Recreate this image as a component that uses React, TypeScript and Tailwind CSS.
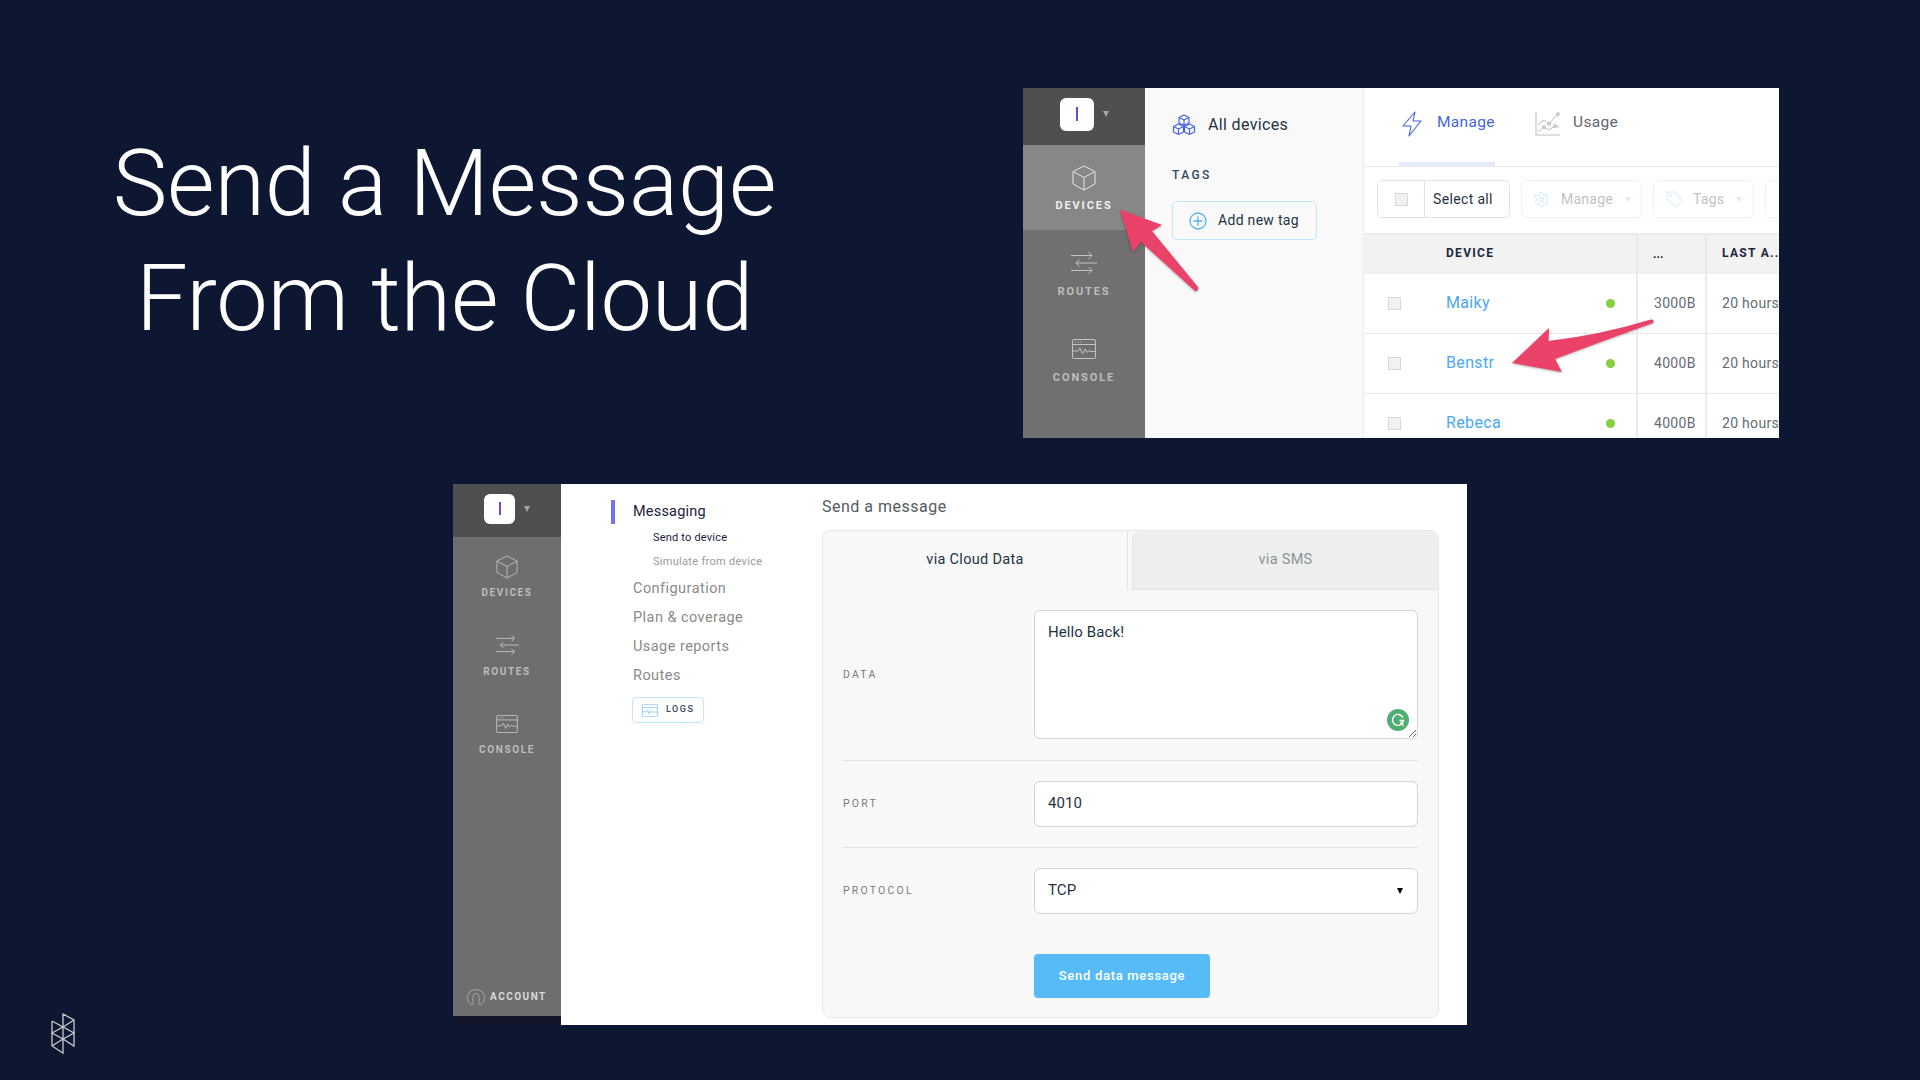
import type { ReactNode } from "react";

function CubeIcon({ className }: { className: string }) {
  return (
    <svg viewBox="0 0 24 26" fill="none" stroke="currentColor" strokeWidth="1" strokeLinejoin="round" className={className}>
      <path d="M12 1 23 6.5V19L12 25 1 19V6.5Z" />
      <path d="M1 6.5 12 12.5 23 6.5M12 12.5V25" />
    </svg>
  );
}

function RoutesIcon({ className }: { className: string }) {
  return (
    <svg viewBox="0 0 26 24" fill="none" stroke="currentColor" strokeWidth="1" className={className}>
      <path d="M0 4.5H21M17.5 1 21 4.5 17.5 8" />
      <path d="M26 12H5M8.5 8.5 5 12 8.5 15.5" />
      <path d="M0 19.5H21M17.5 16 21 19.5 17.5 23" />
    </svg>
  );
}

function ConsoleIcon({ className }: { className: string }) {
  return (
    <svg viewBox="0 0 24 20" fill="none" stroke="currentColor" strokeWidth="1" className={className}>
      <rect x="0.5" y="0.5" width="23" height="19" rx="1.5" />
      <path d="M0.5 5.5H23.5" />
      <path d="M3 3H4M5.5 3H6.5M8 3H9" />
      <path d="M1 12H6L8 9 10.5 15 13 10 15 13.5 17 11.5 19 12.5H23" />
    </svg>
  );
}

function SideItem({ icon, label, className, labelClass }: { icon: ReactNode; label: string; className: string; labelClass: string }) {
  return (
    <div className={`flex flex-col items-center ${className}`}>
      <div className="flex h-[26px] items-center justify-center">{icon}</div>
      <span className={labelClass}>{label}</span>
    </div>
  );
}

function LogoButton({ className, bar }: { className: string; bar: string }) {
  return (
    <div className="flex items-center gap-[9px]">
      <div className={`flex items-center justify-center rounded-[6px] bg-white ${className}`}>
        <div className={`w-[2px] bg-[#7446d8] ${bar}`} />
      </div>
      <div className="h-0 w-0 border-x-[3.5px] border-t-[6px] border-x-transparent border-t-[#a5a5a5]" />
    </div>
  );
}

function Checkbox() {
  return <div className="h-[13px] w-[13px] border border-[#d8d8d8] bg-[#f1f1f1]" />;
}

function Caret() {
  return <div className="h-0 w-0 border-x-[3px] border-t-[5px] border-x-transparent border-t-[#d5ecfa]" />;
}

const devices = [
  { name: "Maiky", size: "3000B" },
  { name: "Benstr", size: "4000B" },
  { name: "Rebeca", size: "4000B" },
];

function TopShot() {
  return (
    <div className="relative flex h-[350px] w-[756px] overflow-hidden bg-white">
      <div className="flex w-[122px] shrink-0 flex-col bg-[#707070]">
        <div className="flex h-[57px] items-center justify-center bg-[#4f4f4f] pb-[5px]">
          <LogoButton className="h-[33px] w-[34px]" bar="h-[14px]" />
        </div>
        <SideItem
          className="h-[85px] bg-[#878787] pt-[20px]"
          icon={<CubeIcon className="h-[26px] w-[24px] text-[#e6e6e6]" />}
          label="DEVICES"
          labelClass="mt-[8px] text-[11px] leading-[13px] font-bold tracking-[1.9px] text-[#f0f0f0]"
        />
        <SideItem
          className="h-[85px] pt-[20px]"
          icon={<RoutesIcon className="h-[24px] w-[26px] text-[#c4c4c4]" />}
          label="ROUTES"
          labelClass="mt-[9px] text-[11px] leading-[13px] font-bold tracking-[1.9px] text-[#bdbdbd]"
        />
        <SideItem
          className="h-[85px] pt-[21px]"
          icon={<ConsoleIcon className="h-[20px] w-[24px] text-[#c4c4c4]" />}
          label="CONSOLE"
          labelClass="mt-[9px] text-[11px] leading-[13px] font-bold tracking-[1.9px] text-[#bdbdbd]"
        />
      </div>

      <div className="w-[219px] shrink-0 border-r border-[#ececec] bg-[#f9f9f9] pt-[27px] pl-[27px]">
        <div className="flex h-[20px] items-center gap-[12px]">
          <svg viewBox="0 0 24 22" fill="none" stroke="#4565e0" strokeWidth="1.2" strokeLinejoin="round" className="h-[22px] w-[24px]">
            <path d="M12 1 17 3.5V9L12 11.5 7 9V3.5Z M7 3.5 12 6 17 3.5M12 6V11.5" />
            <path d="M6.5 10 11.5 12.5V18L6.5 20.5 1.5 18V12.5Z M1.5 12.5 6.5 15 11.5 12.5M6.5 15V20.5" />
            <path d="M17.5 10 22.5 12.5V18L17.5 20.5 12.5 18V12.5Z M12.5 12.5 17.5 15 22.5 12.5M17.5 15V20.5" />
          </svg>
          <span className="text-[16px] leading-[20px] tracking-[0.35px] text-[#1f3345]">All devices</span>
        </div>
        <div className="mt-[33px] text-[12px] leading-[14px] font-medium tracking-[2.4px] text-[#33495c]">TAGS</div>
        <div className="mt-[19px] flex h-[39px] w-[145px] items-center gap-[11px] rounded-[5px] border border-[#bfe6fb] pl-[16px]">
          <svg viewBox="0 0 18 18" fill="none" stroke="#4fb3f6" strokeWidth="1.3" className="h-[18px] w-[18px]">
            <circle cx="9" cy="9" r="8" />
            <path d="M9 4.5V13.5M4.5 9H13.5" />
          </svg>
          <span className="pb-[2px] text-[14px] leading-[18px] tracking-[0.3px] text-[#1f3345]">Add new tag</span>
        </div>
      </div>

      <div className="min-w-0 flex-1">
        <div className="flex h-[79px] border-b border-[#e8e8e8] pl-[35px]">
          <div className="flex h-[78px] w-[96px] items-start gap-[15px] border-b-[4px] border-[#e7eafa] pt-[23px] pl-[3px]">
            <svg viewBox="0 0 20 26" fill="none" stroke="#4565e0" strokeWidth="1.1" strokeLinejoin="round" className="h-[26px] w-[20px]">
              <path d="M13 1 1 15H9L7 25 19 10H11Z" />
            </svg>
            <span className="mt-[2px] text-[15.5px] leading-[18px] tracking-[0.3px] text-[#4565e0]">Manage</span>
          </div>
          <div className="flex items-start gap-[13px] pt-[24px] pl-[40px]">
            <svg viewBox="0 0 25 24" fill="none" stroke="#b9bcc4" strokeWidth="1" className="h-[24px] w-[25px]">
              <path d="M1 0V23H25" />
              <path d="M3 13 9 8 14 12 20 5 23 2" />
              <path d="M3 20 9 15 14 18 20 14 24 15" />
              <circle cx="23" cy="2" r="1.5" />
              <circle cx="14" cy="12" r="1.5" />
              <circle cx="9" cy="15" r="1.5" />
              <circle cx="20" cy="14" r="1.5" />
            </svg>
            <span className="mt-[1px] text-[15.5px] leading-[18px] tracking-[0.35px] text-[#5f6472]">Usage</span>
          </div>
        </div>

        <div className="flex h-[66px] gap-[11px] pt-[13px] pl-[13px]">
          <div className="flex h-[38px] w-[133px] shrink-0 rounded-[5px] border border-[#e3e3e3]">
            <div className="flex w-[47px] items-center justify-center border-r border-[#e3e3e3]">
              <Checkbox />
            </div>
            <span className="pl-[8px] text-[14px] leading-[36px] tracking-[0.35px] text-[#1f3345]">Select all</span>
          </div>
          <div className="flex h-[38px] w-[121px] shrink-0 items-center rounded-[5px] border border-[#eaf6fd] pl-[11px]">
            <svg viewBox="0 0 24 24" fill="none" stroke="#d6eefb" strokeWidth="1.6" className="h-[17px] w-[17px]">
              <path d="M12.22 2h-.44a2 2 0 0 0-2 2v.18a2 2 0 0 1-1 1.73l-.43.25a2 2 0 0 1-2 0l-.15-.08a2 2 0 0 0-2.73.73l-.22.38a2 2 0 0 0 .73 2.73l.15.1a2 2 0 0 1 1 1.72v.51a2 2 0 0 1-1 1.74l-.15.09a2 2 0 0 0-.73 2.73l.22.38a2 2 0 0 0 2.73.73l.15-.08a2 2 0 0 1 2 0l.43.25a2 2 0 0 1 1 1.73V20a2 2 0 0 0 2 2h.44a2 2 0 0 0 2-2v-.18a2 2 0 0 1 1-1.73l.43-.25a2 2 0 0 1 2 0l.15.08a2 2 0 0 0 2.73-.73l.22-.39a2 2 0 0 0-.73-2.73l-.15-.08a2 2 0 0 1-1-1.74v-.5a2 2 0 0 1 1-1.74l.15-.09a2 2 0 0 0 .73-2.73l-.22-.38a2 2 0 0 0-2.73-.73l-.15.08a2 2 0 0 1-2 0l-.43-.25a2 2 0 0 1-1-1.73V4a2 2 0 0 0-2-2z" />
              <circle cx="12" cy="12" r="3" />
            </svg>
            <span className="ml-[11px] text-[14px] tracking-[0.25px] text-[#bcc3c8]">Manage</span>
            <div className="ml-[12px]"><Caret /></div>
          </div>
          <div className="flex h-[38px] w-[101px] shrink-0 items-center rounded-[5px] border border-[#eaf6fd] pl-[12px]">
            <svg viewBox="0 0 18 18" fill="none" stroke="#d6eefb" strokeWidth="1.1" className="h-[17px] w-[17px]">
              <path d="M1 1H9L17 10 10 17 1 8Z" />
              <circle cx="4.5" cy="4.5" r="1.2" />
            </svg>
            <span className="ml-[10px] text-[14px] tracking-[0.25px] text-[#bcc3c8]">Tags</span>
            <div className="ml-[12px]"><Caret /></div>
          </div>
          <div className="h-[38px] w-[60px] shrink-0 rounded-[5px] border border-[#eaf6fd]" />
        </div>

        <div className="grid h-[41px] grid-cols-[272px_69px_1fr] border-t-2 border-b border-y-[#ececec] bg-[#f3f2f2]">
          <div className="pl-[82px] text-[12px] leading-[37px] font-bold tracking-[1.3px] text-[#1a2840]">DEVICE</div>
          <div className="border-l-2 border-[#e9e9e9] pl-[15px] text-[12px] leading-[39px] font-bold text-[#1a2840]">...</div>
          <div className="overflow-hidden border-l-2 border-[#e9e9e9] pl-[15px] text-[12px] leading-[37px] font-bold whitespace-nowrap tracking-[1.3px] text-[#1a2840]">LAST A...</div>
        </div>
        {devices.map((d) => (
          <div key={d.name} className="grid h-[60px] grid-cols-[272px_69px_1fr] border-b border-[#e8e8e8]">
            <div className="flex items-center pl-[24px]">
              <Checkbox />
              <span className="ml-[45px] w-[160px] pb-[2px] text-[16px] tracking-[0.35px] text-[#4aa8f5]">{d.name}</span>
              <span className="h-[9px] w-[9px] rounded-full bg-[#86cf3f]" />
            </div>
            <div className="flex items-center border-l-2 border-[#ececec] pl-[16px] text-[14px] tracking-[0.3px] text-[#666c72]">{d.size}</div>
            <div className="flex items-center overflow-hidden border-l-2 border-[#ececec] pl-[15px] text-[14px] whitespace-nowrap tracking-[0.3px] text-[#666c72]">20 hours ago</div>
          </div>
        ))}
      </div>

      {/* annotation arrows, coordinates are page pixels */}
      <svg viewBox="1023 88 756 350" className="absolute inset-0 h-[350px] w-[756px] drop-shadow-[0_1px_1px_rgba(0,0,0,0.3)]">
        <path d="M1120 209.5 1162 225 1152 231 1198 287Q1199 291 1195 291L1141 242 1133 252Z" fill="#ea4269" />
        <path d="M1512 363 1549 328 1548.500 341Q1600 335 1651 319.500Q1655 320 1653 323Q1600 342 1555 359L1562 372Z" fill="#ea4269" />
      </svg>
    </div>
  );
}

function FormRow({ label, children }: { label: string; children: ReactNode }) {
  return (
    <div className="grid grid-cols-[191px_1fr] items-center">
      <span className="text-[10.5px] tracking-[2.2px] text-[#777b80]">{label}</span>
      {children}
    </div>
  );
}

function BottomShot() {
  return (
    <div className="flex h-[541px] w-[1014px] overflow-hidden bg-white">
      <div className="flex w-[108px] shrink-0 flex-col">
        <div className="flex flex-1 flex-col bg-[#6e6e6e]">
          <div className="flex h-[53px] items-center justify-center bg-[#4f4f4f] pb-[4px]">
            <LogoButton className="h-[30px] w-[31px]" bar="h-[13px]" />
          </div>
          <SideItem
            className="h-[78px] pt-[17px]"
            icon={<CubeIcon className="h-[24px] w-[22px] text-[#bdbdbd]" />}
            label="DEVICES"
            labelClass="mt-[7px] text-[10px] leading-[12px] font-bold tracking-[1.6px] text-[#bcbcbc]"
          />
          <SideItem
            className="h-[78px] pt-[17px]"
            icon={<RoutesIcon className="h-[22px] w-[23px] text-[#c4c4c4]" />}
            label="ROUTES"
            labelClass="mt-[8px] text-[10px] leading-[12px] font-bold tracking-[1.6px] text-[#bcbcbc]"
          />
          <SideItem
            className="h-[78px] pt-[18px]"
            icon={<ConsoleIcon className="h-[18px] w-[22px] text-[#c4c4c4]" />}
            label="CONSOLE"
            labelClass="mt-[7px] text-[10px] leading-[12px] font-bold tracking-[1.6px] text-[#bcbcbc]"
          />
          <div className="mt-auto flex items-center gap-[5px] pb-[11px] pl-[14px]">
            <svg viewBox="0 0 18 16" fill="none" stroke="#a5a5a5" strokeWidth="1" className="h-[16px] w-[18px]">
              <path d="M5 15.500C2 14.500.5 11.500.5 8.500A8.500 8 0 0 1 17.500 8.500C17.500 11.500 16 14.500 13 15.500 11.500 15.500 11.500 14 12 12.500 13 9 12 4.500 9 4.500S5 9 6 12.500C6.500 14 6.500 15.500 5 15.500Z" />
            </svg>
            <span className="text-[10px] leading-[12px] font-bold tracking-[1.5px] text-[#d8d8d8]">ACCOUNT</span>
          </div>
        </div>
        <div className="h-[9px] bg-[#14152a]" />
      </div>

      <div className="w-[261px] shrink-0 pt-[16px] pl-[50px]">
        <div className="flex h-[24px] items-center">
          <div className="h-full w-[4px] bg-[#7272f0]" />
          <span className="ml-[18px] text-[14.5px] tracking-[0.2px] text-[#1a2240]">Messaging</span>
        </div>
        <div className="mt-[2px] flex h-[24px] items-center pl-[42px] text-[11px] tracking-[0.2px] text-[#1a2240]">Send to device</div>
        <div className="flex h-[24px] items-center pl-[42px] text-[11px] tracking-[0.3px] text-[#9a9a9a]">Simulate from device</div>
        <div className="flex flex-col pl-[22px] text-[14.5px] tracking-[0.45px] text-[#8a8a8a]">
          <span className="flex h-[29px] items-center">Configuration</span>
          <span className="flex h-[29px] items-center">Plan &amp; coverage</span>
          <span className="flex h-[29px] items-center">Usage reports</span>
          <span className="flex h-[29px] items-center">Routes</span>
        </div>
        <div className="mt-[7px] ml-[21px] flex h-[26px] w-[72px] items-center gap-[8px] rounded-[4px] border border-[#bfe6fb] pl-[9px]">
          <svg viewBox="0 0 24 20" fill="none" stroke="#62bdf5" strokeWidth="1" className="h-[13px] w-[16px]">
            <rect x="0.5" y="0.5" width="23" height="19" rx="1.500" />
            <path d="M0.5 5.500H23.500" />
            <path d="M1 12H6L8 9 10.500 15 13 10 15 13.500 17 11.500 19 12.500H23" />
          </svg>
          <span className="text-[9px] font-medium tracking-[1.5px] text-[#33495c]">LOGS</span>
        </div>
      </div>

      <div className="min-w-0 flex-1 pr-[28px]">
        <div className="flex h-[46px] items-center text-[16px] tracking-[0.5px] text-[#555b60]">Send a message</div>
        <div className="h-[488px] rounded-[8px] border border-[#e8e8e8] bg-[#f8f8f8]">
          <div className="flex h-[59px]">
            <div className="flex w-[305px] items-center justify-center border-r border-[#e4e4e4] pb-[1px] text-[14.5px] tracking-[0.3px] text-[#1f3345]">via Cloud Data</div>
            <div className="ml-[4px] flex flex-1 items-center justify-center rounded-t-[8px] border-b border-l border-[#e4e4e4] bg-[#eeeeee] text-[14.5px] tracking-[0.3px] text-[#8a949a]">via SMS</div>
          </div>
          <div className="px-[20px] pt-[20px]">
            <FormRow label="DATA">
              <div className="relative h-[129px]">
                <textarea
                  defaultValue="Hello Back!"
                  className="block h-full w-full rounded-[6px] border border-[#d4d4d4] bg-white px-[13px] py-[11px] text-[15px] leading-[20px] tracking-[0.1px] text-[#1f3345] outline-none"
                />
                <div className="absolute right-[9px] bottom-[8px] flex h-[22px] w-[22px] items-center justify-center rounded-full bg-[#4fae72]">
                  <svg viewBox="0 0 14 14" fill="none" stroke="white" strokeWidth="1.400" className="h-[14px] w-[14px]">
                    <path d="M12 4.500A5.500 5.500 0 1 0 12.500 7.500H8.500" />
                    <path d="M9.500 9 12.500 12.500" />
                  </svg>
                </div>
              </div>
            </FormRow>
            <div className="mt-[21px] mb-[20px] h-px bg-[#e4e4e4]" />
            <FormRow label="PORT">
              <div className="flex h-[46px] items-center rounded-[6px] border border-[#d4d4d4] bg-white px-[13px] pb-[1px] text-[15px] tracking-[0.1px] text-[#1f3345]">4010</div>
            </FormRow>
            <div className="my-[20px] h-px bg-[#e4e4e4]" />
            <FormRow label="PROTOCOL">
              <div className="flex h-[46px] items-center justify-between rounded-[6px] border border-[#d4d4d4] bg-white pr-[14px] pb-[1px] pl-[13px] text-[15px] tracking-[0.1px] text-[#1f3345]">
                TCP
                <div className="h-0 w-0 border-x-[3.500px] border-t-[6px] border-x-transparent border-t-black" />
              </div>
            </FormRow>
            <div className="mt-[40px] ml-[191px] flex h-[44px] w-[176px] items-center justify-center rounded-[4px] bg-[#57bbf8] text-[13px] font-medium tracking-[0.7px] text-white">
              Send data message
            </div>
          </div>
        </div>
      </div>
    </div>
  );
}

export default function App() {
  return (
    <div className="h-[1080px] w-[1920px] overflow-hidden bg-[#0d1731] pt-[88px] font-[Roboto,sans-serif]">
      <div className="flex">
        <h1 className="mt-[38px] w-[889px] text-center text-[92px] leading-[115px] font-light tracking-[-0.2px] text-white">
          Send a Message
          <br />
          From the Cloud
        </h1>
        <div className="ml-[134px]">
          <TopShot />
        </div>
      </div>
      <div className="mt-[46px] flex">
        <div className="flex w-[453px] items-end pl-[50px]">
          <svg viewBox="0 0 26 42" fill="none" stroke="#c9c9c9" strokeWidth="1.300" className="mb-[-30px] h-[42px] w-[26px]">
            <path d="M2 8V33L13 40V1L24 7V33L13 26 2 33" />
            <path d="M2 8 13 14 24 7M2 20 13 14 24 20 13 26 2 20Z" />
          </svg>
        </div>
        <BottomShot />
      </div>
    </div>
  );
}
